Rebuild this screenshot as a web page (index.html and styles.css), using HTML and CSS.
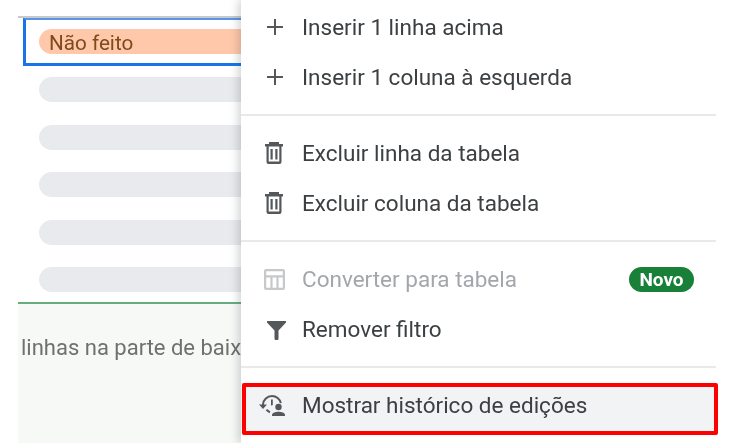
FILE: index.html
```html
<!DOCTYPE html>
<html lang="pt">
<head>
    <meta charset="UTF-8">
    <meta name="viewport" content="width=device-width, initial-scale=1.0">
    <title>Menu da tabela</title>
    <link rel="stylesheet" href="styles.css">
</head>
<body>
    <div class="page">
        <div class="sheet">
            <div class="cell-selected">
                <div class="pill pill-orange">Não feito</div>
            </div>
            <div class="pill-list">
                <div class="pill"></div>
                <div class="pill"></div>
                <div class="pill"></div>
                <div class="pill"></div>
                <div class="pill"></div>
            </div>
            <div class="sheet-footer">linhas na parte de baixo</div>
        </div>

        <div class="menu">
            <div class="menu-item">
                <svg class="icon" viewBox="0 0 24 24"><path d="M11 4h2v7h7v2h-7v7h-2v-7H4v-2h7z"/></svg>
                <span>Inserir 1 linha acima</span>
            </div>
            <div class="menu-item">
                <svg class="icon" viewBox="0 0 24 24"><path d="M11 4h2v7h7v2h-7v7h-2v-7H4v-2h7z"/></svg>
                <span>Inserir 1 coluna à esquerda</span>
            </div>
            <div class="divider"></div>
            <div class="menu-item">
                <svg class="icon" viewBox="0 0 24 24"><path d="M6 1h10v2h4v2.500h-1.500V21a2 2 0 0 1-2 2h-11a2 2 0 0 1-2-2V5.500H2V3h4zM5.700 5.500V20.500h10.600V5.500zM7.500 8h2.200v10.500H7.500zM12.300 8h2.200v10.500h-2.200z"/></svg>
                <span>Excluir linha da tabela</span>
            </div>
            <div class="menu-item">
                <svg class="icon" viewBox="0 0 24 24"><path d="M6 1h10v2h4v2.500h-1.500V21a2 2 0 0 1-2 2h-11a2 2 0 0 1-2-2V5.500H2V3h4zM5.700 5.500V20.500h10.600V5.500zM7.500 8h2.200v10.500H7.500zM12.300 8h2.200v10.500h-2.200z"/></svg>
                <span>Excluir coluna da tabela</span>
            </div>
            <div class="divider"></div>
            <div class="menu-item disabled">
                <svg class="icon" viewBox="0 0 24 24"><path d="M3 2h17a2 2 0 0 1 2 2v17a2 2 0 0 1-2 2H3a2 2 0 0 1-2-2V4a2 2 0 0 1 2-2zM3.200 4.200v4h16.600v-4zM3.200 10.400v10.400h4.200V10.400zM9.600 10.400v10.400h3.800V10.400zM15.600 10.400v10.400h4.200V10.400z"/></svg>
                <span>Converter para tabela</span>
                <span class="badge">Novo</span>
            </div>
            <div class="menu-item">
                <svg class="icon" viewBox="0 0 24 24"><path d="M4 4h19v1.600L15.500 13.500v8.300a1.200 1.200 0 0 1-1.200 1.200h-1.600a1.200 1.200 0 0 1-1.200-1.200v-8.300L4 5.600z"/></svg>
                <span>Remover filtro</span>
            </div>
            <div class="divider"></div>
            <div class="menu-item active">
                <svg class="icon icon-history" viewBox="0 0 28 24"><path d="M13 2a10 10 0 0 0-10 9.500H0l4 4.500 4-4.500H5a8 8 0 0 1 8-7.500 8 8 0 0 1 7.800 6.300l2-.4A10 10 0 0 0 13 2z"/><path d="M12 6.500h1.800v5.200l-1 1-.8-.8z"/><path d="M6.700 17.500l1.400-1.400 3.300 2.500-1 1.700z"/><circle cx="19.500" cy="14" r="3.200"/><path d="M13 23v-1c0-2 3.500-3.200 6.500-3.200S26 20 26 22v1z"/></svg>
                <span>Mostrar histórico de edições</span>
            </div>
            <div class="highlight-box"></div>
        </div>
    </div>
</body>
</html>
```

FILE: styles.css
```css
body {
    margin: 0;
    background-color: white;
    font-family: Roboto, Arial, sans-serif;
}
.page {
    display: flex;
    width: 730px;
    height: 443px;
    overflow: hidden;
    filter: blur(0.3px);
}
.sheet {
    width: 223px;
    margin-left: 18px;
    margin-top: 16px;
    border-top: 2px solid #c8c9ca;
    display: flex;
    flex-direction: column;
    overflow: hidden;
    white-space: nowrap;
}
.cell-selected {
    margin-left: 5px;
    height: 48px;
    box-sizing: border-box;
    border: 3px solid #1a73e8;
    border-top: 2px solid #5a95e8;
    border-right: none;
    padding: 9px 0 0 13px;
    flex-shrink: 0;
}
.pill {
    height: 25px;
    border-radius: 13px 0 0 13px;
    background-color: #e8eaed;
}
.pill-orange {
    background-color: #ffc8aa;
    color: #7f4a1c;
    font-size: 20.700px;
    line-height: 28px;
    padding-left: 10px;
}
.pill-list {
    display: flex;
    flex-direction: column;
    gap: 22.600px;
    padding: 11px 0 10px 21px;
}
.sheet-footer {
    flex: 1;
    border-top: 2px solid #66ad7e;
    background-color: #f7f9f7;
    color: #6f7070;
    font-size: 22px;
    padding: 31px 0 0 3px;
}
.menu {
    position: relative;
    flex: 1;
    display: flex;
    flex-direction: column;
    padding-top: 2px;
    background-color: white;
    box-shadow: -3px 0 8px rgba(60,64,67,0.22);
}
.menu-item {
    display: flex;
    align-items: center;
    flex-shrink: 0;
    gap: 15px;
    width: 475px;
    height: 50px;
    box-sizing: border-box;
    padding: 0 22px;
    color: #3c4043;
    font-size: 22.500px;
    white-space: nowrap;
}
.icon {
    width: 24px;
    height: 24px;
    fill: #55585b;
    flex-shrink: 0;
}
.menu-item.disabled {
    color: #a3a7ac;
}
.menu-item.disabled .icon {
    fill: #c6c8ca;
}
.menu-item.active {
    margin-top: 3px;
    height: 52px;
    padding-bottom: 8px;
    background-color: #f1f3f4;
}
.icon-history {
    width: 28px;
    margin-left: -4px;
}
.badge {
    margin-left: auto;
    width: 65px;
    height: 25px;
    line-height: 25px;
    border-radius: 13px;
    background-color: #188038;
    color: white;
    font-size: 19px;
    font-weight: bold;
    text-align: center;
}
.divider {
    flex-shrink: 0;
    width: 475px;
    height: 2px;
    margin: 12px 0;
    background-color: #e8e9eb;
}
.highlight-box {
    position: absolute;
    left: 1px;
    top: 383px;
    width: 468px;
    height: 44px;
    border: 4px solid #ff0000;
    border-radius: 2px;
}
```
